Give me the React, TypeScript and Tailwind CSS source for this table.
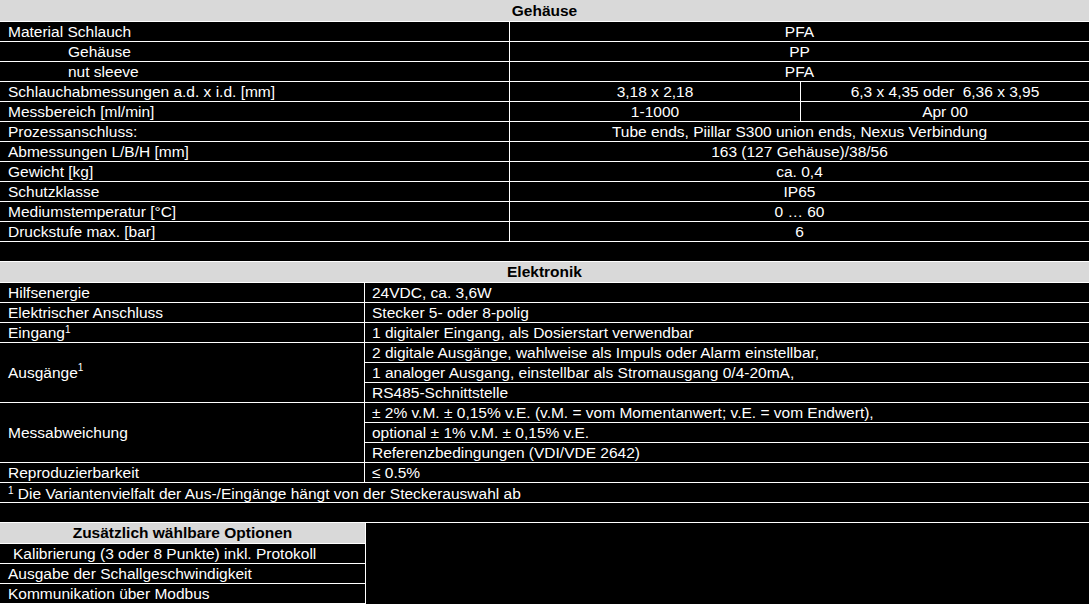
const rowCls = 'flex h-[20px] border-b border-white'

function GRow({ label, value, indent }: { label: string; value: string; indent?: boolean }) {
  return (
    <div className={rowCls}>
      <div className={indent ? 'w-[510px] border-r border-white pl-[68px]' : 'w-[510px] border-r border-white pl-[8px]'}>
        {label}
      </div>
      <div className="flex-1 text-center">{value}</div>
    </div>
  )
}

function SplitRow({ label, a, b }: { label: string; a: string; b: string }) {
  return (
    <div className={rowCls}>
      <div className="w-[510px] border-r border-white pl-[8px]">{label}</div>
      <div className="w-[291px] border-r border-white text-center">{a}</div>
      <div className="flex-1 text-center whitespace-pre">{b}</div>
    </div>
  )
}

function ERow({ label, value }: { label: React.ReactNode; value: string }) {
  return (
    <div className={rowCls}>
      <div className="w-[365px] border-r border-white pl-[8px]">{label}</div>
      <div className="flex-1 pl-[7px]">{value}</div>
    </div>
  )
}

function EGroup({ label, lines }: { label: React.ReactNode; lines: string[] }) {
  return (
    <div className="flex h-[60px] border-b border-white">
      <div className="w-[365px] border-r border-white pl-[8px] flex items-center">{label}</div>
      <div className="flex-1 flex flex-col">
        <div className="h-[20px] border-b border-white pl-[7px]">{lines[0]}</div>
        <div className="h-[20px] border-b border-white pl-[7px]">{lines[1]}</div>
        <div className="h-[19px] pl-[7px]">{lines[2]}</div>
      </div>
    </div>
  )
}

const Sup = () => <sup className="text-[10px]">1</sup>

export default function App() {
  return (
    <div className="w-[1090px] h-[604px] overflow-hidden bg-black border-r border-white text-white text-[15.5px] leading-[19px] font-['Liberation_Sans',Arial,sans-serif]">
      {/* Gehäuse */}
      <div className="h-[22px] bg-[#d9d9d9] text-black font-bold text-center leading-[21px] border-b border-white">
        Gehäuse
      </div>
      <GRow label="Material Schlauch" value="PFA" />
      <GRow label="Gehäuse" value="PP" indent />
      <GRow label="nut sleeve" value="PFA" indent />
      <SplitRow label="Schlauchabmessungen a.d. x i.d. [mm]" a="3,18 x 2,18" b="6,3 x 4,35 oder  6,36 x 3,95" />
      <SplitRow label="Messbereich [ml/min]" a="1-1000" b="Apr 00" />
      <GRow label="Prozessanschluss:" value="Tube ends, Piillar S300 union ends, Nexus Verbindung" />
      <GRow label="Abmessungen L/B/H [mm]" value="163 (127 Gehäuse)/38/56" />
      <GRow label="Gewicht [kg]" value="ca. 0,4" />
      <GRow label="Schutzklasse" value="IP65" />
      <GRow label="Mediumstemperatur [°C]" value="0 … 60" />
      <GRow label="Druckstufe max. [bar]" value="6" />
      <div className={rowCls} />

      {/* Elektronik */}
      <div className="h-[21px] bg-[#d9d9d9] text-black font-bold text-center leading-[20px] border-b border-white">
        Elektronik
      </div>
      <ERow label="Hilfsenergie" value="24VDC, ca. 3,6W" />
      <ERow label="Elektrischer Anschluss" value="Stecker 5- oder 8-polig" />
      <ERow label={<>Eingang<Sup /></>} value="1 digitaler Eingang, als Dosierstart verwendbar" />
      <EGroup
        label={<>Ausgänge<Sup /></>}
        lines={[
          '2 digitale Ausgänge, wahlweise als Impuls oder Alarm einstellbar,',
          '1 analoger Ausgang, einstellbar als Stromausgang 0/4-20mA,',
          'RS485-Schnittstelle',
        ]}
      />
      <EGroup
        label="Messabweichung"
        lines={[
          '± 2% v.M. ± 0,15% v.E. (v.M. = vom Momentanwert; v.E. = vom Endwert),',
          'optional ± 1% v.M. ± 0,15% v.E.',
          'Referenzbedingungen (VDI/VDE 2642)',
        ]}
      />
      <ERow label="Reproduzierbarkeit" value="≤ 0.5%" />
      <div className={rowCls}>
        <div className="pl-[8px] pt-[1px]">
          <Sup /> Die Variantenvielfalt der Aus-/Eingänge hängt von der Steckerauswahl ab
        </div>
      </div>
      <div className={rowCls} />

      {/* Optionen */}
      <div className="w-[366px] border-r border-white">
        <div className="h-[21px] bg-[#d9d9d9] text-black font-bold text-center leading-[20px] border-b border-white">
          Zusätzlich wählbare Optionen
        </div>
        <div className="h-[20px] border-b border-white pl-[13px]">Kalibrierung (3 oder 8 Punkte) inkl. Protokoll</div>
        <div className="h-[20px] border-b border-white pl-[8px]">Ausgabe der Schallgeschwindigkeit</div>
        <div className="h-[20px] border-b border-white pl-[8px]">Kommunikation über Modbus</div>
      </div>
    </div>
  )
}
